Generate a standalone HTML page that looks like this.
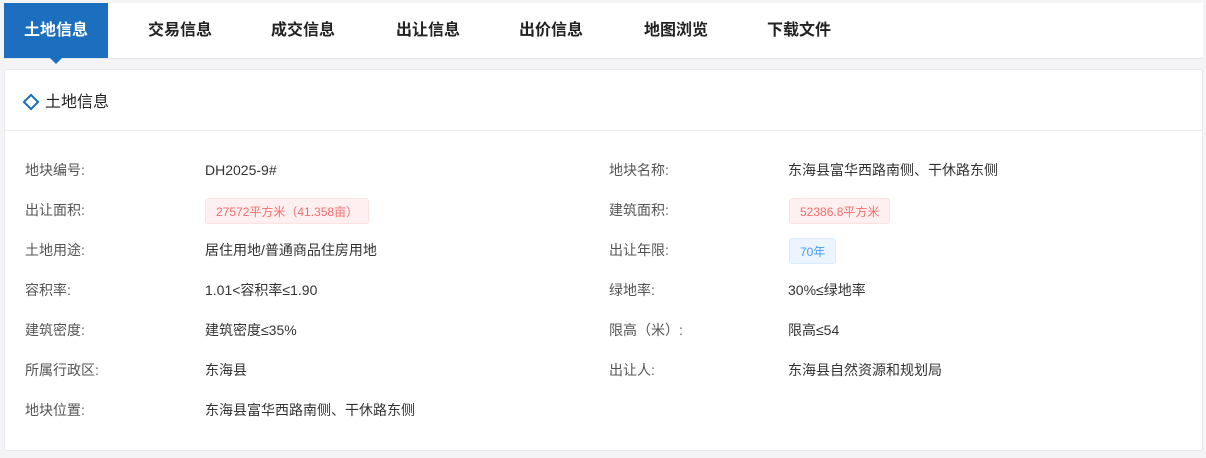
<!DOCTYPE html>
<html><head><meta charset="utf-8"><style>
body{margin:0;width:1206px;height:458px;background:#f4f4f6;font-family:"Liberation Sans","Noto Sans CJK SC",sans-serif;position:relative;overflow:hidden}
.tabs{position:absolute;left:4px;top:3px;width:1199px;height:55px;background:#fff;border-bottom:1px solid #e4e7ed}
.tab{position:absolute;top:0;height:55px;line-height:55px;font-size:16px;font-weight:bold;color:#222;width:104px;text-align:center}
.tab.a{background:#1c6fbe;color:#fff}
.tab.a:after{content:"";position:absolute;left:46px;bottom:-6px;border-left:6px solid transparent;border-right:6px solid transparent;border-top:6px solid #1c6fbe}
.card{position:absolute;left:4px;top:69px;width:1197px;height:380px;background:#fff;border:1px solid #e8eaee;border-radius:3px}
.hd{height:60px;border-bottom:1px solid #ebeef5;position:relative}
.dia{position:absolute;left:20px;top:26px;width:8px;height:8px;border:2px solid #1c6fbe;transform:rotate(45deg)}
.ht{position:absolute;left:40px;top:18px;font-size:16px;color:#222}
.r{position:absolute;font-size:14px;color:#333;line-height:20px}
.l{color:#555}
.tag{position:absolute;font-size:12px;height:26px;line-height:26px;padding:0 10px;border-radius:3px;box-sizing:border-box;white-space:nowrap}
.red{background:#fef0f0;border:1px solid #fde2e2;color:#f56c6c}
.blue{background:#ecf5ff;border:1px solid #d9ecff;color:#409eff}
</style></head><body>
<div class="tabs">
<div class="tab a" style="left:0">土地信息</div>
<div class="tab" style="left:124px">交易信息</div>
<div class="tab" style="left:247px">成交信息</div>
<div class="tab" style="left:372px">出让信息</div>
<div class="tab" style="left:495px">出价信息</div>
<div class="tab" style="left:620px">地图浏览</div>
<div class="tab" style="left:743px">下载文件</div>
</div>
<div class="card"><div class="hd"><div class="dia"></div><div class="ht">土地信息</div></div></div>
<div class="r l" style="left:25px;top:160px">地块编号:</div><div class="r" style="left:205px;top:160px">DH2025-9#</div>
<div class="r l" style="left:609px;top:160px">地块名称:</div><div class="r" style="left:788px;top:160px">东海县富华西路南侧、干休路东侧</div>
<div class="r l" style="left:25px;top:200px">出让面积:</div><div class="tag red" style="left:205px;top:198px">27572平方米（41.358亩）</div>
<div class="r l" style="left:609px;top:200px">建筑面积:</div><div class="tag red" style="left:789px;top:198px">52386.8平方米</div>
<div class="r l" style="left:25px;top:240px">土地用途:</div><div class="r" style="left:205px;top:240px">居住用地/普通商品住房用地</div>
<div class="r l" style="left:609px;top:240px">出让年限:</div><div class="tag blue" style="left:789px;top:238px">70年</div>
<div class="r l" style="left:25px;top:280px">容积率:</div><div class="r" style="left:205px;top:280px">1.01&lt;容积率≤1.90</div>
<div class="r l" style="left:609px;top:280px">绿地率:</div><div class="r" style="left:788px;top:280px">30%≤绿地率</div>
<div class="r l" style="left:25px;top:320px">建筑密度:</div><div class="r" style="left:205px;top:320px">建筑密度≤35%</div>
<div class="r l" style="left:609px;top:320px">限高（米）:</div><div class="r" style="left:788px;top:320px">限高≤54</div>
<div class="r l" style="left:25px;top:360px">所属行政区:</div><div class="r" style="left:205px;top:360px">东海县</div>
<div class="r l" style="left:609px;top:360px">出让人:</div><div class="r" style="left:788px;top:360px">东海县自然资源和规划局</div>
<div class="r l" style="left:25px;top:400px">地块位置:</div><div class="r" style="left:205px;top:400px">东海县富华西路南侧、干休路东侧</div>
</body></html>
